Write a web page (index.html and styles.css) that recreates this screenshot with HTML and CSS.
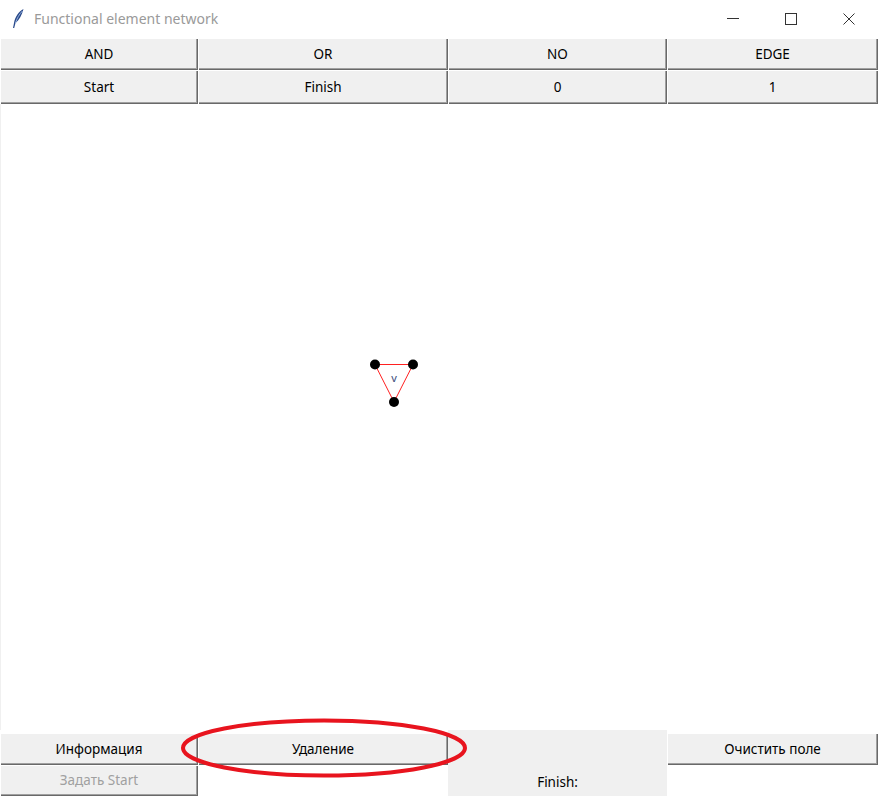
FILE: index.html
```html
<!DOCTYPE html>
<html>
<head>
<meta charset="utf-8">
<link rel="stylesheet" href="styles.css">
</head>
<body>
<div class="window">
  <div class="titlebar">
    <svg class="feather" width="14" height="22" viewBox="0 0 14 22">
      <path d="M12.5 1 C8 3 4 9 3 15 L2 20 L3.2 20 L4.5 15 C8 12 11 7 12.5 1 Z" fill="#2a4a8a"/>
      <path d="M11.5 3 C8.5 6 6 10 4.5 15" stroke="#9ab4e0" stroke-width="1" fill="none"/>
    </svg>
    <span class="title">Functional element network</span>
    <div class="controls">
      <svg width="12" height="12" viewBox="0 0 12 12"><path d="M0 5.5 H12" stroke="#333" stroke-width="1"/></svg>
      <svg width="12" height="12" viewBox="0 0 12 12"><rect x="0.5" y="0.5" width="11" height="11" fill="none" stroke="#333" stroke-width="1"/></svg>
      <svg width="12" height="12" viewBox="0 0 12 12"><path d="M0.5 0.5 L11.5 11.5 M11.5 0.5 L0.5 11.5" stroke="#333" stroke-width="1"/></svg>
    </div>
  </div>
  <div class="toolbar">
    <div class="btn">AND</div>
    <div class="btn">OR</div>
    <div class="btn">NO</div>
    <div class="btn">EDGE</div>
    <div class="btn">Start</div>
    <div class="btn">Finish</div>
    <div class="btn">0</div>
    <div class="btn">1</div>
  </div>
  <div class="canvas">
    <svg class="diagram" width="878" height="631" viewBox="0 0 878 631">
      <g transform="translate(0,-104)">
        <path d="M374 364.5 L412 364.5 L393 402 Z" fill="none" stroke="#ff2020" stroke-width="1"/>
        <circle cx="374" cy="364.5" r="5" fill="#000"/>
        <circle cx="412" cy="364.5" r="5" fill="#000"/>
        <circle cx="393" cy="402" r="5" fill="#000"/>
        <text x="393" y="382" text-anchor="middle" font-family="Noto Sans, sans-serif" font-size="11" fill="#3a4a7a">v</text>
      </g>
    </svg>
  </div>
  <div class="bottom">
    <div class="btn b-info">Информация</div>
    <div class="btn b-del">Удаление</div>
    <div class="finish">Finish:</div>
    <div class="btn b-clear">Очистить поле</div>
    <div class="btn b-start disabled">Задать Start</div>
    <div class="blank"></div>
    <div class="blank"></div>
    <svg class="mark" width="292" height="62" viewBox="0 0 292 62">
      <ellipse cx="146" cy="31" rx="141" ry="27.5" fill="none" stroke="#e8141e" stroke-width="4"/>
    </svg>
  </div>
</div>
</body>
</html>
```
FILE: styles.css
```css
html, body {
  margin: 0;
  padding: 0;
  background: #ffffff;
}
.window {
  width: 878px;
  height: 796px;
  display: flex;
  flex-direction: column;
  overflow: hidden;
  font-family: "Noto Sans", "Open Sans", sans-serif;
  font-size: 13.5px;
  color: #000;
}
.titlebar {
  height: 38px;
  display: flex;
  align-items: center;
  background: #fff;
  position: relative;
}
.feather {
  margin-left: 11px;
}
.title {
  margin-left: 9px;
  margin-top: -2px;
  font-size: 14px;
  color: #9a9a9a;
  font-family: "Noto Sans", sans-serif;
}
.controls {
  margin-left: auto;
  display: flex;
  align-items: center;
  gap: 46px;
  margin-right: 23px;
}
.toolbar {
  display: grid;
  grid-template-columns: 198px 250px 219px 211px;
  grid-template-rows: 32px 34px;
}
.btn {
  box-sizing: border-box;
  background: #f0f0f0;
  display: flex;
  align-items: center;
  justify-content: center;
  box-shadow: inset 1px 1px 0 #ffffff, inset -1px -1px 0 #696969, inset -2px -2px 0 #a0a0a0;
  font-size: 13.5px;
  padding-bottom: 1px;
}
.canvas {
  height: 626px;
  background: #fff;
  border-left: 1px solid #f0f0f0;
  position: relative;
}
.diagram {
  display: block;
}
.bottom {
  display: grid;
  grid-template-columns: 198px 250px 219px 211px;
  grid-template-rows: 35px 31px;
  position: relative;
  background: #fff;
}
.b-info { grid-column: 1; grid-row: 1; margin-top: 3px; }
.b-del { grid-column: 2; grid-row: 1; margin-top: 3px; }
.b-clear { grid-column: 4; grid-row: 1; margin-top: 3px; }
.b-start { grid-column: 1; grid-row: 2; }
.finish {
  grid-column: 3;
  grid-row: 1 / span 2;
  background: #f0f0f0;
  display: flex;
  align-items: flex-end;
  justify-content: center;
  padding-bottom: 5px;
  font-size: 13.5px;
}
.disabled {
  color: #a0a0a0;
}
.mark {
  position: absolute;
  left: 178px;
  top: -13px;
  pointer-events: none;
}
```
